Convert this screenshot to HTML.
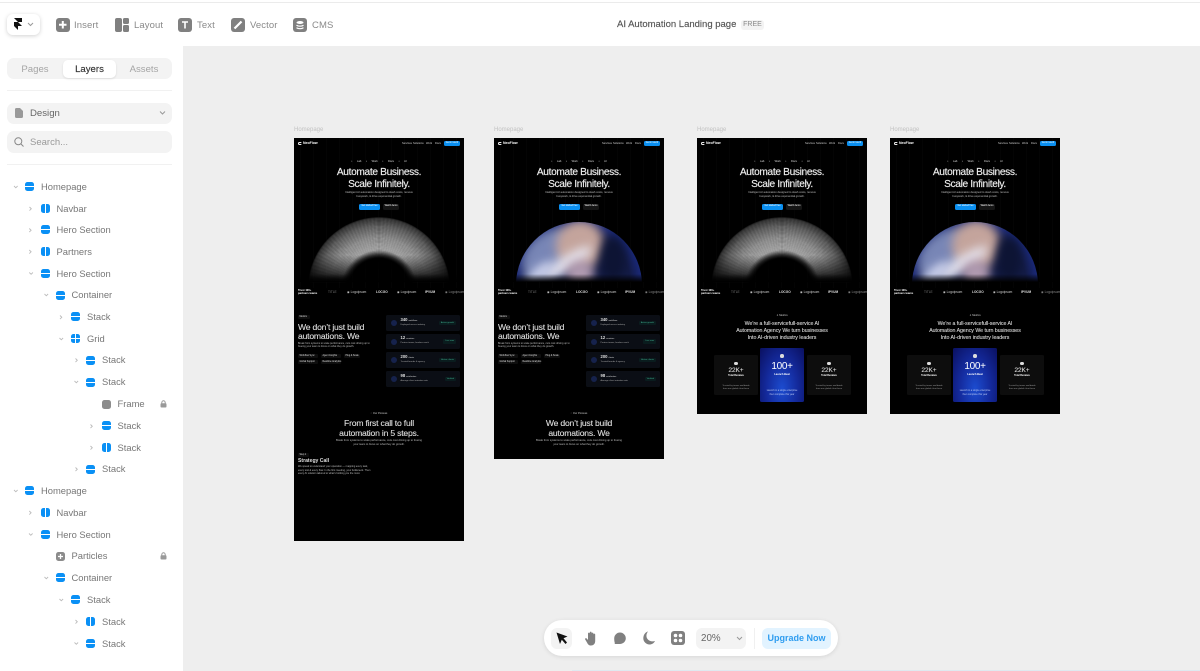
<!DOCTYPE html>
<html><head><meta charset="utf-8"><title>AI Automation Landing page</title>
<style>
*{box-sizing:border-box}
html,body{margin:0;padding:0;width:1200px;height:671px;overflow:hidden;background:#eee;font-family:"Liberation Sans",sans-serif}
body{filter:blur(.3px)}
.a{position:absolute}
.top{left:0;top:0;width:1200px;height:46px;background:#fff}
.topline{left:0;top:2px;width:1200px;height:1px;background:#ebebeb}
.side{left:0;top:46px;width:183px;height:625px;background:#fff}
.tl{font-size:9.5px;color:#8a8a8a;top:20px;line-height:12px;white-space:nowrap;letter-spacing:.1px}
.ti{top:18px;width:13.5px;height:13.5px;background:#808080;border-radius:3px}
.pill{background:#f3f3f3;border-radius:7px}
.rl{position:absolute;font-size:9.4px;line-height:12px;color:#777;white-space:nowrap;margin-top:.3px}
.ic{position:absolute;width:9px;height:9px;border-radius:2.5px;background:#0a90f5}
.ic.h:after{content:"";position:absolute;left:0;right:0;top:4px;height:1px;background:#fff}
.ic.v:after{content:"";position:absolute;top:0;bottom:0;left:4px;width:1px;background:#fff}
.ic.g:after{content:"";position:absolute;left:0;right:0;top:4px;height:1px;background:#fff}
.ic.g:before{content:"";position:absolute;top:0;bottom:0;left:4px;width:1px;background:#fff}
.lb{position:absolute;top:126.500px;font-size:6px;color:#c2c2c2;line-height:7px;white-space:nowrap;margin-top:.8px}
.fr{position:absolute;top:138px;width:170px;background:#000;overflow:hidden;color:#fff;filter:blur(.15px)}
.t{position:absolute;white-space:nowrap;line-height:1}
.c{text-align:center;left:0;width:170px}
.stripes{left:0;top:0;width:170px;height:150px;background:repeating-linear-gradient(90deg,#000 0 6px,#040404 6px 7px,#000 7px 13px)}
.h1{font-size:10.2px;font-weight:400;letter-spacing:-.35px;color:#eee;-webkit-text-stroke:.15px #eee}
.h2{font-size:8.6px;letter-spacing:-.2px;color:#ddd;-webkit-text-stroke:.12px #ddd}
.h3{font-size:5.2px;color:#ddd;-webkit-text-stroke:.1px #ddd}
.sub{font-size:2.7px;color:#bbb}
.nav{font-size:2.6px;color:#ccc;top:4.5px}
.logo{position:absolute;left:4px;top:3.5px;width:3.5px;height:3.5px;border-radius:50%;border:1px solid #eee;border-right-color:transparent}
.logot{left:9px;top:3.6px;font-size:3.5px;font-weight:700}
.dome{left:14px;top:79px;width:142px;height:142px;border-radius:50%;
background:repeating-radial-gradient(circle,transparent 0 .8px,rgba(0,0,0,.22) .8px 1.7px),repeating-conic-gradient(rgba(0,0,0,.14) 0 1.6deg,transparent 1.6deg 3.2deg),radial-gradient(circle,#000 30px,#333 33px,#c4c4c4 38px,#aaa 50px,#727272 62px,#3c3c3c 70px,#000 71px);
-webkit-mask-image:linear-gradient(#000 0,#000 38px,rgba(0,0,0,.5) 52px,transparent 66px);mask-image:linear-gradient(#000 0,#000 38px,rgba(0,0,0,.5) 52px,transparent 66px);filter:blur(.45px)}
.fade{left:0;top:136px;width:170px;height:8px;background:linear-gradient(transparent,#000)}
.planet{left:22px;top:84px;width:126px;height:126px;border-radius:50%;overflow:hidden;background:radial-gradient(circle at 50% 50%,#141c44 0,#141c48 58%,#1f33a0 82%,#4a74f0 100%)}
.planet i{position:absolute;border-radius:50%;filter:blur(5px);display:block}
.pmask{left:0;top:84px;width:170px;height:60px;overflow:hidden}
.card{position:absolute;left:92px;width:74px;height:15.6px;background:#0b0e15;border-radius:1.5px}
.card b{position:absolute;left:14.5px;top:2.8px;font-size:4.2px;line-height:1;color:#ddd;font-weight:700;white-space:nowrap}
.card b span{font-size:2px;font-weight:400;margin-left:1px}
.card u{position:absolute;left:14.5px;top:8.5px;font-size:2.2px;line-height:1;color:#aaa;text-decoration:none;white-space:nowrap}
.card s{position:absolute;left:5px;top:5px;width:6px;height:6px;border-radius:50%;background:#16224c;display:block}
.card em{position:absolute;right:4px;top:5.5px;height:4.4px;padding:0 2px;border-radius:1px;background:#0a1c1e;color:#3fae8e;font-size:2.2px;line-height:4.4px;font-style:normal;white-space:nowrap}
.tag{position:absolute;height:4px;background:#0e0e0e;border-radius:1px;font-size:2.3px;line-height:4px;color:#ddd;padding:0 1.5px;white-space:nowrap}
.sc{position:absolute;width:44px;height:40px;top:217px;background:#0d0d0d;border-radius:1.5px}
.mid{position:absolute;left:63px;top:210px;width:44px;height:54px;border-radius:1.5px;background:radial-gradient(ellipse at 50% 75%,#1c4cd0 0,#142a9c 50%,#0a1060 100%)}
.in{position:absolute;left:0;width:100%;text-align:center;white-space:nowrap;line-height:1}
.star{position:absolute;width:3.5px;height:3.5px;border-radius:50%;background:#ddd;left:50%;margin-left:-1.75px}
</style></head>
<body>
<div class="a" style="left:0;top:0;width:1200px;height:671px;background:#eee"></div>

<div class="a top"></div><div class="a topline"></div>
<div class="a" style="left:7px;top:14px;width:33px;height:21px;background:#fff;border-radius:6px;box-shadow:0 1px 4px rgba(0,0,0,.18)"></div>
<svg class="a" style="left:13px;top:18px" width="10" height="13" viewBox="0 0 10 13"><path d="M1 0h8v4H5zM1 4h4l4 4H5v4L1 8z" fill="#111"/></svg>
<svg class="a" style="left:27px;top:22px" width="7" height="5" viewBox="0 0 7 5"><path d="M1 1l2.500 2.500L6 1" stroke="#999" fill="none"/></svg>

<div class="a ti" style="left:56px"><svg width="14" height="14"><path d="M6.800 3v7.500M3 6.800h7.500" stroke="#fff" stroke-width="2"/></svg></div>
<div class="a tl" style="left:74px">Insert</div>
<div class="a ti" style="left:115px;background:none"><svg width="14" height="14"><rect x="0" y="0" width="7" height="14" rx="2" fill="#808080"/><rect x="8" y="0" width="6" height="6" rx="1.500" fill="#808080"/><rect x="8" y="7" width="6" height="7" rx="1.500" fill="#808080"/></svg></div>
<div class="a tl" style="left:134px">Layout</div>
<div class="a ti" style="left:178px"><svg width="14" height="14"><path d="M4 4h6M7 4v6.500" stroke="#fff" stroke-width="1.600" fill="none"/></svg></div>
<div class="a tl" style="left:197px">Text</div>
<div class="a ti" style="left:231px"><svg width="14" height="14"><path d="M3.500 10.500L10.500 3.500" stroke="#fff" stroke-width="2.200"/></svg></div>
<div class="a tl" style="left:250px">Vector</div>
<div class="a ti" style="left:293px"><svg width="14" height="14"><ellipse cx="7" cy="4.500" rx="3.500" ry="1.500" fill="#fff"/><path d="M3.500 7.200c1.500 1.300 5.500 1.300 7 0M3.500 9.700c1.500 1.300 5.500 1.300 7 0" stroke="#fff" stroke-width="1.200" fill="none"/></svg></div>
<div class="a tl" style="left:312px">CMS</div>

<div class="a" style="left:617px;top:19px;font-size:9.5px;line-height:12px;color:#555;white-space:nowrap;-webkit-text-stroke:.15px #555">AI Automation Landing page</div>
<div class="a" style="left:741px;top:20px;width:23px;height:10px;background:#f3f3f3;border-radius:3px;font-size:7px;line-height:10px;color:#888;text-align:center">FREE</div>

<div class="a side"></div>
<div class="a pill" style="left:7px;top:58px;width:165px;height:21px"></div>
<div class="a" style="left:63px;top:60px;width:53px;height:18px;background:#fff;border-radius:5px;box-shadow:0 1px 2px rgba(0,0,0,.1)"></div>
<div class="a" style="left:7px;top:64px;width:56px;text-align:center;font-size:9.6px;line-height:12px;color:#a5a5a5">Pages</div>
<div class="a" style="left:63px;top:64px;width:53px;text-align:center;font-size:9.6px;line-height:12px;color:#333;-webkit-text-stroke:.15px #333">Layers</div>
<div class="a" style="left:116px;top:64px;width:56px;text-align:center;font-size:9.6px;line-height:12px;color:#a5a5a5">Assets</div>
<div class="a" style="left:7px;top:90px;width:165px;height:1px;background:#f1f1f1"></div>
<div class="a pill" style="left:7px;top:103px;width:165px;height:21px"></div>
<svg class="a" style="left:15px;top:108px" width="8" height="10"><path d="M0 1.500Q0 0 1.500 0H5L8 3v5.500Q8 10 6.500 10h-5Q0 10 0 8.500z" fill="#999"/></svg>
<div class="a" style="left:30px;top:108px;font-size:9.6px;line-height:12px;color:#666">Design</div>
<svg class="a" style="left:159px;top:110px" width="7" height="6"><path d="M1 1.500l2.500 2.500L6 1.500" stroke="#999" fill="none"/></svg>
<div class="a pill" style="left:7px;top:131px;width:165px;height:22px"></div>
<svg class="a" style="left:14px;top:137px" width="10" height="10"><circle cx="4.300" cy="4.300" r="3.500" stroke="#888" fill="none"/><path d="M7 7l2.500 2.500" stroke="#888"/></svg>
<div class="a" style="left:30px;top:137px;font-size:9.5px;line-height:12px;color:#999">Search...</div>
<div class="a" style="left:7px;top:164px;width:165px;height:1px;background:#f1f1f1"></div>

<!-- layers -->
<svg class="a" style="left:0;top:0" width="183" height="671" fill="none" stroke="#bbb" stroke-width=".9">
<path d="M14 186l1.800 1.800 1.800-1.800M29.500 207l1.800 1.800-1.800 1.800"/>
<path d="M29.300 228.500l1.800 1.800-1.800 1.800M29.300 250l1.800 1.800-1.800 1.800M29.300 272.500l1.800 1.800 1.800-1.800M44.500 294l1.800 1.800 1.800-1.800M60 315.500l1.800 1.800-1.800 1.800M59.500 338l1.800 1.800 1.800-1.800M75.500 358.500l1.800 1.800-1.800 1.800M74.500 381l1.800 1.800 1.800-1.800M90.500 424.500l1.800 1.800-1.800 1.800M90.500 446l1.800 1.800-1.800 1.800M75.500 467.500l1.800 1.800-1.800 1.800M14 490l1.800 1.800 1.800-1.800M29.300 511l1.800 1.800-1.800 1.800M29 533.500l1.800 1.800 1.800-1.800M44.500 577l1.800 1.800 1.800-1.800M59.500 599l1.800 1.800 1.800-1.800M75.500 620l1.800 1.800-1.800 1.800M74.500 642.500l1.800 1.800 1.800-1.800"/>
</svg>
<div class="ic h" style="left:25px;top:182px"></div><div class="rl" style="left:41px;top:181px">Homepage</div>
<div class="ic v" style="left:41px;top:204px"></div><div class="rl" style="left:56.500px;top:202.500px">Navbar</div>
<div class="ic h" style="left:41px;top:225px"></div><div class="rl" style="left:56.500px;top:224px">Hero Section</div>
<div class="ic v" style="left:41px;top:247px"></div><div class="rl" style="left:56.500px;top:246px">Partners</div>
<div class="ic h" style="left:41px;top:269px"></div><div class="rl" style="left:56.500px;top:267.500px">Hero Section</div>
<div class="ic h" style="left:56px;top:291px"></div><div class="rl" style="left:71.500px;top:289px">Container</div>
<div class="ic h" style="left:71px;top:312px"></div><div class="rl" style="left:87px;top:311px">Stack</div>
<div class="ic g" style="left:71px;top:334px"></div><div class="rl" style="left:87px;top:333px">Grid</div>
<div class="ic h" style="left:86px;top:356px"></div><div class="rl" style="left:102px;top:354px">Stack</div>
<div class="ic h" style="left:86px;top:378px"></div><div class="rl" style="left:102px;top:376px">Stack</div>
<div class="ic" style="left:101.500px;top:399.500px;background:#8c8c8c"></div><div class="rl" style="left:117.500px;top:398px">Frame</div>
<div class="ic h" style="left:101.500px;top:421px"></div><div class="rl" style="left:117.500px;top:420px">Stack</div>
<div class="ic v" style="left:101.500px;top:443px"></div><div class="rl" style="left:117.500px;top:441.500px">Stack</div>
<div class="ic h" style="left:86px;top:465px"></div><div class="rl" style="left:102px;top:463px">Stack</div>
<div class="ic h" style="left:25px;top:486px"></div><div class="rl" style="left:41px;top:485px">Homepage</div>
<div class="ic v" style="left:41px;top:508px"></div><div class="rl" style="left:56.500px;top:506.500px">Navbar</div>
<div class="ic h" style="left:41px;top:530px"></div><div class="rl" style="left:56.500px;top:528.500px">Hero Section</div>
<div class="ic" style="left:56px;top:551.500px;background:#8c8c8c"><svg style="position:absolute;left:0;top:0" width="9" height="9"><path d="M4.500 2v5M2 4.500h5" stroke="#fff" stroke-width="1.300"/></svg></div><div class="rl" style="left:71.500px;top:550px">Particles</div>
<div class="ic h" style="left:56px;top:573px"></div><div class="rl" style="left:71.500px;top:572px">Container</div>
<div class="ic h" style="left:71px;top:595px"></div><div class="rl" style="left:87px;top:594px">Stack</div>
<div class="ic v" style="left:86px;top:617px"></div><div class="rl" style="left:102px;top:615.500px">Stack</div>
<div class="ic h" style="left:86px;top:639px"></div><div class="rl" style="left:102px;top:637.500px">Stack</div>
<svg class="a" style="left:160px;top:400px" width="7" height="8"><rect x=".5" y="3.200" width="6" height="4.300" rx="1" fill="#999"/><path d="M1.800 3.500V2.500a1.700 1.700 0 0 1 3.400 0v1" stroke="#999" fill="none"/></svg>
<svg class="a" style="left:160px;top:552px" width="7" height="8"><rect x=".5" y="3.200" width="6" height="4.300" rx="1" fill="#999"/><path d="M1.800 3.500V2.500a1.700 1.700 0 0 1 3.400 0v1" stroke="#999" fill="none"/></svg>

<!-- canvas labels -->
<div class="lb" style="left:294px">Homepage</div>
<div class="lb" style="left:494px">Homepage</div>
<div class="lb" style="left:697px">Homepage</div>
<div class="lb" style="left:890px">Homepage</div>

<!-- FRAME 1 -->
<div class="fr" style="left:294px;height:403px">
 <div class="a stripes"></div>
 <div class="logo"></div><div class="t logot">NeoFlow</div>
 <div class="t nav" style="left:108px">Services</div><div class="t nav" style="left:119px">Solutions</div><div class="t nav" style="left:132px">Work</div><div class="t nav" style="left:141px">Docs</div>
 <div class="t" style="left:150px;top:3px;width:16px;height:5px;background:#0a8ff0;border-radius:1.500px;font-size:2.300px;line-height:5px;text-align:center">Get in touch</div>
 <div class="t c" style="top:22.500px;font-size:2.600px;color:#ddd;word-spacing:4px">• Lab • Work • Docs • AI</div>
 <div class="t c h1" style="top:29.500px">Automate Business.</div>
 <div class="t c h1" style="top:41.800px">Scale Infinitely.</div>
 <div class="t c sub" style="top:53.800px">Intelligent AI automation designed to slash costs, remove</div>
 <div class="t c sub" style="top:58.200px">busywork, &amp; drive exponential growth.</div>
 <div class="t" style="left:65px;top:66px;width:21px;height:5.500px;background:#0a8ff0;border-radius:1.500px;font-size:2.300px;line-height:5.500px;text-align:center">Get started free</div>
 <div class="t" style="left:89px;top:66px;width:16px;height:5.500px;background:#151515;border-radius:1.500px;font-size:2.300px;line-height:5.500px;text-align:center">Watch demo</div>
 <div class="a dome"></div><div class="a fade"></div>
 <div class="t" style="left:4px;top:151px;font-size:2.700px;line-height:3.200px;font-weight:700;white-space:normal;width:22px">Trust 100+ partners teams</div>
 <div class="t" style="left:34px;top:152.500px;font-size:3.200px;color:#777">TITLE</div>
 <div class="t" style="left:53px;top:152.500px;font-size:3.200px;color:#ccc">◉ Logoipsum</div>
 <div class="t" style="left:82px;top:152.500px;font-size:3.200px;color:#ddd;font-weight:700">LOCGO</div>
 <div class="t" style="left:103px;top:152.500px;font-size:3.200px;color:#ccc">◉ Logoipsum</div>
 <div class="t" style="left:131px;top:152.500px;font-size:3.200px;color:#ddd;font-weight:700">IPVUM</div>
 <div class="t" style="left:151px;top:152.500px;font-size:3.200px;color:#888">◉ Logoipsum</div>
 <div class="tag" style="left:4px;top:177px;width:12px">Metrics</div>
 <div class="t h2" style="left:4px;top:184.500px">We don’t just build</div>
 <div class="t h2" style="left:4px;top:193.800px">automations. We</div>
 <div class="t sub" style="left:4px;top:204.500px;font-size:2.500px">Break from systems to scale performance, cuts cost driving up to</div>
 <div class="t sub" style="left:4px;top:208.200px;font-size:2.500px">freeing your team to focus on what they do growth.</div>
 <div class="tag" style="left:4px;top:215.800px;width:20px">Workflow Sync</div><div class="tag" style="left:27px;top:215.800px;width:19.500px">Agent Insights</div><div class="tag" style="left:50px;top:215.800px;width:15.500px">Plug &amp; Scale</div>
 <div class="tag" style="left:4px;top:221.500px;width:20px">Global Support</div><div class="tag" style="left:27px;top:221.500px;width:20px">Realtime Analytics</div>
 <div class="card" style="top:177px"><s></s><b>340<span>workflows</span></b><u>Deployed across industry</u><em>Active growth</em></div>
 <div class="card" style="top:195.700px"><s></s><b>12<span>countries</span></b><u>Partner teams, borders reach</u><em>Live now</em></div>
 <div class="card" style="top:214.400px"><s></s><b>200<span>clients</span></b><u>Trusted brands &amp; agency</u><em>Active clients</em></div>
 <div class="card" style="top:233.100px"><s></s><b>98<span>satisfaction</span></b><u>Average client retention rate</u><em>Verified</em></div>
 <div class="t c" style="top:274.500px;font-size:2.600px;color:#ccc">◌ Our Process</div>
 <div class="t c h2" style="top:281px">From first call to full</div>
 <div class="t c h2" style="top:290.500px">automation in 5 steps.</div>
 <div class="t c sub" style="top:302px">Break from systems to scale performance, cuts cost driving up to freeing</div>
 <div class="t c sub" style="top:305.500px">your team to focus on what they do growth.</div>
 <div class="tag" style="left:4px;top:314.700px;width:11px">Step 1</div>
 <div class="t" style="left:4px;top:320.500px;font-size:5.100px;font-weight:700;color:#ddd">Strategy Call</div>
 <div class="t sub" style="left:4px;top:328px;font-size:2.500px">We speak to understand your operation — mapping every task,</div>
 <div class="t sub" style="left:4px;top:331.700px;font-size:2.500px">every tool &amp; every flow. In the first meeting, your bottleneck. Then</div>
 <div class="t sub" style="left:4px;top:335.300px;font-size:2.500px">every AI solution tailored to what's holding you the most.</div>
</div>

<!-- FRAME 2 -->
<div class="fr" style="left:494px;height:321px">
 <div class="a stripes"></div>
 <div class="logo"></div><div class="t logot">NeoFlow</div>
 <div class="t nav" style="left:108px">Services</div><div class="t nav" style="left:119px">Solutions</div><div class="t nav" style="left:132px">Work</div><div class="t nav" style="left:141px">Docs</div>
 <div class="t" style="left:150px;top:3px;width:16px;height:5px;background:#0a8ff0;border-radius:1.500px;font-size:2.300px;line-height:5px;text-align:center">Get in touch</div>
 <div class="t c" style="top:22.500px;font-size:2.600px;color:#ddd;word-spacing:4px">• Lab • Work • Docs • AI</div>
 <div class="t c h1" style="top:29.500px">Automate Business.</div>
 <div class="t c h1" style="top:41.800px">Scale Infinitely.</div>
 <div class="t c sub" style="top:53.800px">Intelligent AI automation designed to slash costs, remove</div>
 <div class="t c sub" style="top:58.200px">busywork, &amp; drive exponential growth.</div>
 <div class="t" style="left:65px;top:66px;width:21px;height:5.500px;background:#0a8ff0;border-radius:1.500px;font-size:2.300px;line-height:5.500px;text-align:center">Get started free</div>
 <div class="t" style="left:89px;top:66px;width:16px;height:5.500px;background:#151515;border-radius:1.500px;font-size:2.300px;line-height:5.500px;text-align:center">Watch demo</div>
 <div class="a pmask"><div class="a planet" style="top:0"><i style="left:2px;top:10px;width:64px;height:46px;background:#7886b6;transform:rotate(-40deg)"></i><i style="left:40px;top:-2px;width:48px;height:50px;background:#c4a49c;transform:rotate(20deg)"></i><i style="left:22px;top:34px;width:58px;height:14px;background:#e6e4ee;transform:rotate(-32deg)"></i><i style="left:6px;top:46px;width:34px;height:11px;background:#d2d7f0;transform:rotate(-40deg)"></i><i style="left:50px;top:38px;width:28px;height:26px;background:#b09ab0"></i><i style="left:84px;top:14px;width:26px;height:46px;background:#0d1434"></i></div></div>
 <div class="a fade"></div>
 <div class="t" style="left:4px;top:151px;font-size:2.700px;line-height:3.200px;font-weight:700;white-space:normal;width:22px">Trust 100+ partners teams</div>
 <div class="t" style="left:34px;top:152.500px;font-size:3.200px;color:#777">TITLE</div>
 <div class="t" style="left:53px;top:152.500px;font-size:3.200px;color:#ccc">◉ Logoipsum</div>
 <div class="t" style="left:82px;top:152.500px;font-size:3.200px;color:#ddd;font-weight:700">LOCGO</div>
 <div class="t" style="left:103px;top:152.500px;font-size:3.200px;color:#ccc">◉ Logoipsum</div>
 <div class="t" style="left:131px;top:152.500px;font-size:3.200px;color:#ddd;font-weight:700">IPVUM</div>
 <div class="t" style="left:151px;top:152.500px;font-size:3.200px;color:#888">◉ Logoipsum</div>
 <div class="tag" style="left:4px;top:177px;width:12px">Metrics</div>
 <div class="t h2" style="left:4px;top:184.500px">We don’t just build</div>
 <div class="t h2" style="left:4px;top:193.800px">automations. We</div>
 <div class="t sub" style="left:4px;top:204.500px;font-size:2.500px">Break from systems to scale performance, cuts cost driving up to</div>
 <div class="t sub" style="left:4px;top:208.200px;font-size:2.500px">freeing your team to focus on what they do growth.</div>
 <div class="tag" style="left:4px;top:215.800px;width:20px">Workflow Sync</div><div class="tag" style="left:27px;top:215.800px;width:19.500px">Agent Insights</div><div class="tag" style="left:50px;top:215.800px;width:15.500px">Plug &amp; Scale</div>
 <div class="tag" style="left:4px;top:221.500px;width:20px">Global Support</div><div class="tag" style="left:27px;top:221.500px;width:20px">Realtime Analytics</div>
 <div class="card" style="top:177px"><s></s><b>340<span>workflows</span></b><u>Deployed across industry</u><em>Active growth</em></div>
 <div class="card" style="top:195.700px"><s></s><b>12<span>countries</span></b><u>Partner teams, borders reach</u><em>Live now</em></div>
 <div class="card" style="top:214.400px"><s></s><b>200<span>clients</span></b><u>Trusted brands &amp; agency</u><em>Active clients</em></div>
 <div class="card" style="top:233.100px"><s></s><b>98<span>satisfaction</span></b><u>Average client retention rate</u><em>Verified</em></div>
 <div class="t c" style="top:274.500px;font-size:2.600px;color:#ccc">◌ Our Process</div>
 <div class="t c h2" style="top:281px">We don’t just build</div>
 <div class="t c h2" style="top:290.500px">automations. We</div>
 <div class="t c sub" style="top:302px">Break from systems to scale performance, cuts cost driving up to freeing</div>
 <div class="t c sub" style="top:305.500px">your team to focus on what they do growth.</div>
</div>

<!-- FRAME 3 -->
<div class="fr" style="left:697px;height:276px">
 <div class="a stripes"></div>
 <div class="logo"></div><div class="t logot">NeoFlow</div>
 <div class="t nav" style="left:108px">Services</div><div class="t nav" style="left:119px">Solutions</div><div class="t nav" style="left:132px">Work</div><div class="t nav" style="left:141px">Docs</div>
 <div class="t" style="left:150px;top:3px;width:16px;height:5px;background:#0a8ff0;border-radius:1.500px;font-size:2.300px;line-height:5px;text-align:center">Get in touch</div>
 <div class="t c" style="top:22.500px;font-size:2.600px;color:#ddd;word-spacing:4px">• Lab • Work • Docs • AI</div>
 <div class="t c h1" style="top:29.500px">Automate Business.</div>
 <div class="t c h1" style="top:41.800px">Scale Infinitely.</div>
 <div class="t c sub" style="top:53.800px">Intelligent AI automation designed to slash costs, remove</div>
 <div class="t c sub" style="top:58.200px">busywork, &amp; drive exponential growth.</div>
 <div class="t" style="left:65px;top:66px;width:21px;height:5.500px;background:#0a8ff0;border-radius:1.500px;font-size:2.300px;line-height:5.500px;text-align:center">Get started free</div>
 <div class="t" style="left:89px;top:66px;width:16px;height:5.500px;background:#151515;border-radius:1.500px;font-size:2.300px;line-height:5.500px;text-align:center">Watch demo</div>
 <div class="a dome"></div><div class="a fade"></div>
 <div class="t" style="left:4px;top:151px;font-size:2.700px;line-height:3.200px;font-weight:700;white-space:normal;width:22px">Trust 100+ partners teams</div>
 <div class="t" style="left:34px;top:152.500px;font-size:3.200px;color:#777">TITLE</div>
 <div class="t" style="left:53px;top:152.500px;font-size:3.200px;color:#ccc">◉ Logoipsum</div>
 <div class="t" style="left:82px;top:152.500px;font-size:3.200px;color:#ddd;font-weight:700">LOCGO</div>
 <div class="t" style="left:103px;top:152.500px;font-size:3.200px;color:#ccc">◉ Logoipsum</div>
 <div class="t" style="left:131px;top:152.500px;font-size:3.200px;color:#ddd;font-weight:700">IPVUM</div>
 <div class="t" style="left:151px;top:152.500px;font-size:3.200px;color:#888">◉ Logoipsum</div>
 <div class="t c" style="top:177px;font-size:2.600px;color:#ccc">✦ Metrics</div>
 <div class="t c h3" style="top:184.400px">We’re a full-servicefull-service AI</div>
 <div class="t c h3" style="top:191.400px">Automation Agency We turn businesses</div>
 <div class="t c h3" style="top:198.100px">Into AI-driven industry leaders</div>
 <div class="sc" style="left:17px"><div class="star" style="top:6.500px"></div><div class="in" style="top:13px;font-size:6.400px;color:#ddd;-webkit-text-stroke:.1px #ddd">22K+</div><div class="in" style="top:20px;font-size:2.400px;font-weight:700">Total Reviews</div><div class="in" style="top:30px;font-size:2.200px;color:#999">Trusted by teams worldwide</div><div class="in" style="top:33px;font-size:2.200px;color:#999">from one global client base</div></div>
 <div class="mid"><div class="star" style="top:6px"></div><div class="in" style="top:13.500px;font-size:10px;letter-spacing:-.3px">100+</div><div class="in" style="top:25.500px;font-size:2.600px;font-weight:700">Launch Beat</div><div class="in" style="top:42px;font-size:2.400px;color:#b8c6f0">Launch in a single enterprise</div><div class="in" style="top:46px;font-size:2.400px;color:#b8c6f0">then complete this year</div></div>
 <div class="sc" style="left:110px"><div class="star" style="top:6.500px"></div><div class="in" style="top:13px;font-size:6.400px;color:#ddd;-webkit-text-stroke:.1px #ddd">22K+</div><div class="in" style="top:20px;font-size:2.400px;font-weight:700">Total Reviews</div><div class="in" style="top:30px;font-size:2.200px;color:#999">Trusted by teams worldwide</div><div class="in" style="top:33px;font-size:2.200px;color:#999">from one global client base</div></div>
</div>

<!-- FRAME 4 -->
<div class="fr" style="left:890px;height:276px">
 <div class="a stripes"></div>
 <div class="logo"></div><div class="t logot">NeoFlow</div>
 <div class="t nav" style="left:108px">Services</div><div class="t nav" style="left:119px">Solutions</div><div class="t nav" style="left:132px">Work</div><div class="t nav" style="left:141px">Docs</div>
 <div class="t" style="left:150px;top:3px;width:16px;height:5px;background:#0a8ff0;border-radius:1.500px;font-size:2.300px;line-height:5px;text-align:center">Get in touch</div>
 <div class="t c" style="top:22.500px;font-size:2.600px;color:#ddd;word-spacing:4px">• Lab • Work • Docs • AI</div>
 <div class="t c h1" style="top:29.500px">Automate Business.</div>
 <div class="t c h1" style="top:41.800px">Scale Infinitely.</div>
 <div class="t c sub" style="top:53.800px">Intelligent AI automation designed to slash costs, remove</div>
 <div class="t c sub" style="top:58.200px">busywork, &amp; drive exponential growth.</div>
 <div class="t" style="left:65px;top:66px;width:21px;height:5.500px;background:#0a8ff0;border-radius:1.500px;font-size:2.300px;line-height:5.500px;text-align:center">Get started free</div>
 <div class="t" style="left:89px;top:66px;width:16px;height:5.500px;background:#151515;border-radius:1.500px;font-size:2.300px;line-height:5.500px;text-align:center">Watch demo</div>
 <div class="a pmask"><div class="a planet" style="top:0"><i style="left:2px;top:10px;width:64px;height:46px;background:#7886b6;transform:rotate(-40deg)"></i><i style="left:40px;top:-2px;width:48px;height:50px;background:#c4a49c;transform:rotate(20deg)"></i><i style="left:22px;top:34px;width:58px;height:14px;background:#e6e4ee;transform:rotate(-32deg)"></i><i style="left:6px;top:46px;width:34px;height:11px;background:#d2d7f0;transform:rotate(-40deg)"></i><i style="left:50px;top:38px;width:28px;height:26px;background:#b09ab0"></i><i style="left:84px;top:14px;width:26px;height:46px;background:#0d1434"></i></div></div>
 <div class="a fade"></div>
 <div class="t" style="left:4px;top:151px;font-size:2.700px;line-height:3.200px;font-weight:700;white-space:normal;width:22px">Trust 100+ partners teams</div>
 <div class="t" style="left:34px;top:152.500px;font-size:3.200px;color:#777">TITLE</div>
 <div class="t" style="left:53px;top:152.500px;font-size:3.200px;color:#ccc">◉ Logoipsum</div>
 <div class="t" style="left:82px;top:152.500px;font-size:3.200px;color:#ddd;font-weight:700">LOCGO</div>
 <div class="t" style="left:103px;top:152.500px;font-size:3.200px;color:#ccc">◉ Logoipsum</div>
 <div class="t" style="left:131px;top:152.500px;font-size:3.200px;color:#ddd;font-weight:700">IPVUM</div>
 <div class="t" style="left:151px;top:152.500px;font-size:3.200px;color:#888">◉ Logoipsum</div>
 <div class="t c" style="top:177px;font-size:2.600px;color:#ccc">✦ Metrics</div>
 <div class="t c h3" style="top:184.400px">We’re a full-servicefull-service AI</div>
 <div class="t c h3" style="top:191.400px">Automation Agency We turn businesses</div>
 <div class="t c h3" style="top:198.100px">Into AI-driven industry leaders</div>
 <div class="sc" style="left:17px"><div class="star" style="top:6.500px"></div><div class="in" style="top:13px;font-size:6.400px;color:#ddd;-webkit-text-stroke:.1px #ddd">22K+</div><div class="in" style="top:20px;font-size:2.400px;font-weight:700">Total Reviews</div><div class="in" style="top:30px;font-size:2.200px;color:#999">Trusted by teams worldwide</div><div class="in" style="top:33px;font-size:2.200px;color:#999">from one global client base</div></div>
 <div class="mid"><div class="star" style="top:6px"></div><div class="in" style="top:13.500px;font-size:10px;letter-spacing:-.3px">100+</div><div class="in" style="top:25.500px;font-size:2.600px;font-weight:700">Launch Beat</div><div class="in" style="top:42px;font-size:2.400px;color:#b8c6f0">Launch in a single enterprise</div><div class="in" style="top:46px;font-size:2.400px;color:#b8c6f0">then complete this year</div></div>
 <div class="sc" style="left:110px"><div class="star" style="top:6.500px"></div><div class="in" style="top:13px;font-size:6.400px;color:#ddd;-webkit-text-stroke:.1px #ddd">22K+</div><div class="in" style="top:20px;font-size:2.400px;font-weight:700">Total Reviews</div><div class="in" style="top:30px;font-size:2.200px;color:#999">Trusted by teams worldwide</div><div class="in" style="top:33px;font-size:2.200px;color:#999">from one global client base</div></div>
</div>

<!-- bottom toolbar -->
<div class="a" style="left:572px;top:670px;width:628px;height:1px;background:#dfe9f0"></div>
<div class="a" style="left:544px;top:620px;width:294px;height:36px;background:#fff;border-radius:18px;box-shadow:0 1px 5px rgba(0,0,0,.1)"></div>
<div class="a" style="left:551px;top:628px;width:21px;height:21px;background:#f3f3f3;border-radius:6px"></div>
<svg class="a" style="left:556px;top:632px" width="12" height="13" viewBox="0 0 12 13"><path d="M.5.500l11 4-4 1.800 3.500 4.200-1.500 1.500-3.700-4.200L4 12z" fill="#111"/></svg>
<svg class="a" style="left:585px;top:631px" width="12" height="15" viewBox="0 0 12 15"><path d="M3 7V2.500a.9.900 0 0 1 1.800 0V1.500a.9.900 0 0 1 1.800 0v1a.9.900 0 0 1 1.800 0v1a.9.900 0 0 1 1.800 0V10c0 3-2 4.500-4.200 4.500-2 0-3-1-4-3L.2 8.500c-.5-1 .8-1.900 1.500-1L3 9z" fill="#808080"/></svg>
<svg class="a" style="left:614px;top:632px" width="12" height="13" viewBox="0 0 12 13"><path d="M6 .5a5.800 5.800 0 0 1 5.800 5.800c0 3.300-2.700 5.700-6 5.700H1.500c-.8 0-1-.6-.7-1.100C.4 10 .2 8 .2 6.300A5.800 5.800 0 0 1 6 .5z" fill="#808080"/></svg>
<svg class="a" style="left:643px;top:631px" width="12" height="14" viewBox="0 0 12 14"><path d="M5 .5C3 3 3 6 4.500 8 6 10 9 11 12 10c-1 2.300-3.300 3.500-5.500 3.500A6.200 6.200 0 0 1 .3 7.300C.3 4 2.200 1.200 5 .5z" fill="#808080"/></svg>
<svg class="a" style="left:671px;top:631px" width="14" height="14" viewBox="0 0 14 14"><rect width="14" height="14" rx="3" fill="#808080"/><circle cx="4.500" cy="4.500" r="1.800" fill="#fff"/><circle cx="9.500" cy="4.500" r="1.800" fill="#fff"/><circle cx="4.500" cy="9.500" r="1.800" fill="#fff"/><circle cx="9.500" cy="9.500" r="1.800" fill="#fff"/></svg>
<div class="a" style="left:696px;top:628px;width:50px;height:21px;background:#f3f3f3;border-radius:6px"></div>
<div class="a" style="left:701px;top:633px;font-size:9.800px;line-height:12px;color:#666">20%</div>
<svg class="a" style="left:736px;top:636px" width="7" height="5"><path d="M1 1l2.500 2.500L6 1" stroke="#999" fill="none"/></svg>
<div class="a" style="left:754px;top:628px;width:1px;height:21px;background:#f0f0f0"></div>
<div class="a" style="left:762px;top:628px;width:69px;height:21px;background:#e2f3ff;border-radius:6px;font-size:9px;line-height:21px;font-weight:700;color:#2f9df0;text-align:center;white-space:nowrap">Upgrade Now</div>
</body></html>
